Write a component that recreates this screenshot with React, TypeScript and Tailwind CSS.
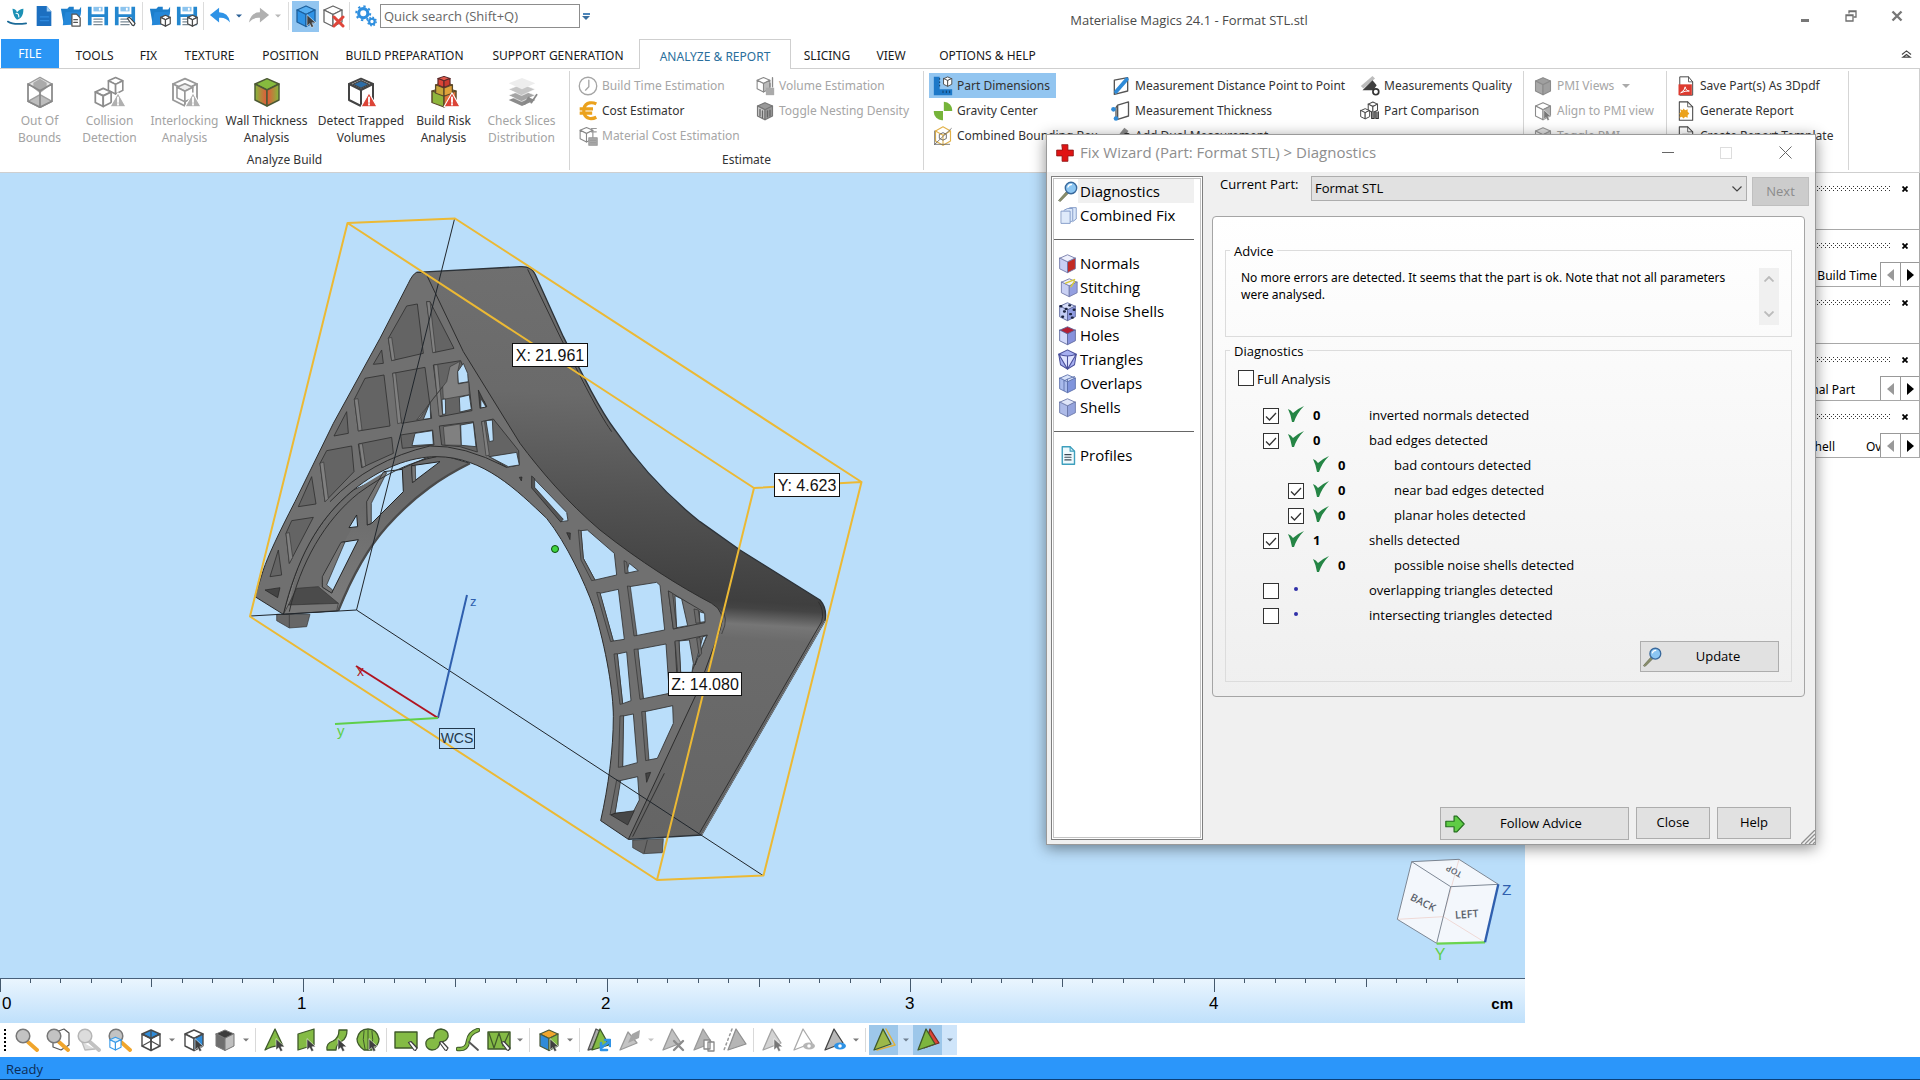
import React, { useState } from "react";

type P = { children?: React.ReactNode; s?: string; box?: string };

function Ico({ children, s = "size-6", box = "0 0 24 24" }: P) {
  return (
    <svg viewBox={box} className={`${s} shrink-0`} fill="none" strokeLinejoin="round" strokeLinecap="round" aria-hidden="true">
      {children}
    </svg>
  );
}

function CubeShape({ t = "#fff", l = "#fff", r = "#fff", k = "#4a4a4a", w = 1.5 }: { t?: string; l?: string; r?: string; k?: string; w?: number }) {
  return (
    <g stroke={k} strokeWidth={w}>
      <path d="M3 6 12 2l9 4-9 4.500z" fill={t} />
      <path d="M3 6v12l9 4.500V10.500z" fill={l} />
      <path d="M21 6v12l-9 4.500V10.500z" fill={r} />
    </g>
  );
}

const Warn = ({ c }: { c: string }) => (
  <g>
    <path d="M18 12.500 24 23H12z" fill={c} stroke="#fff" strokeWidth=".8" />
    <path d="M18 16v3.500M18 21v.5" stroke="#fff" strokeWidth="1.400" />
  </g>
);

const Arrow = ({ x = 0, y = 0, c = "#3f3f3f" }: { x?: number; y?: number; c?: string }) => (
  <path transform={`translate(${x} ${y})`} d="M13 11v11l2.700-2.300 1.800 3.800 2.200-1-1.800-3.700h3.600z" fill={c} stroke="#fff" strokeWidth=".5" />
);

const Pen = ({ c = "#3f3f3f" }: { c?: string }) => <path d="M14.500 14.500 17 13.500l6 6.500-1.500 2.500L20 22z" fill="#fff" stroke={c} strokeWidth="1.200" />;

const Caret = ({ c = "#8a8a8a" }: { c?: string }) => (
  <svg viewBox="0 0 8 4" className="h-1 w-2" aria-hidden="true">
    <path d="M0 0h8L4 4z" fill={c} />
  </svg>
);

/* ---------- quick access toolbar ---------- */

const Floppy = ({ children }: P) => (
  <Ico s="size-[22px]">
    <path d="M1 2h4v8h14V2h4v20h-4v-9H5v9H1z" fill="#2487cf" />
    <path d="M7 2h10v5H7z" fill="#8cc4ee" />
    <path d="M13 3h2v3h-2z" fill="#fff" />
    <path d="M7.500 15.500h9M7.500 18.500h9M7.500 21.500h9" stroke="#7a8a96" strokeWidth="1.300" />
    {children}
  </Ico>
);
const Folder = ({ children }: P) => (
  <Ico s="size-[22px]">
    <path d="M1 4h7l2-2h5v3h6l2-3v5l-3 14H4z" fill="#1c7ecb" />
    <path d="M6 8 23 7l-3 14-17 1z" fill="#2487d8" />
    {children}
  </Ico>
);
const SmallCube = () => (
  <g transform="translate(11 10) scale(.58)">
    <CubeShape w={2.2} />
  </g>
);
const FileNew = () => (
  <Ico s="size-[22px]">
    <path d="M4 1h11l5 6v16H4z" fill="#1c6fc0" />
    <path d="M15 1v6h5z" fill="#9fcdf3" />
    <path d="M8 13h9M8 17h9" stroke="#2f8ade" strokeWidth="1.500" />
  </Ico>
);
const Logo = () => (
  <Ico s="size-[22px]">
    <path d="M7 4q4 0 5 4 3-4 7-4 0 7-3 10-2 2-4 2-4-3-5-12z" fill="#1c91b5" />
    <path d="M11 9q3 0 3 4" stroke="#fff" strokeWidth="1.200" />
    <path d="M2 18q6 4 20 2" stroke="#1b6a98" strokeWidth="1.800" />
  </Ico>
);
const Undo = ({ c }: { c: string }) => (
  <Ico s="size-[22px]">
    <path d="M1 11 11 3v5q10 0 12 11-5-6-12-5v5z" fill={c} />
  </Ico>
);
const Redo = ({ c }: { c: string }) => (
  <Ico s="size-[22px]">
    <path d="M23 11 13 3v5Q3 8 1 19q5-6 12-5v5z" fill={c} />
  </Ico>
);
const Gears = () => (
  <Ico s="size-[22px]">
    <circle cx="9" cy="9" r="5" stroke="#2f8fdf" strokeWidth="3.400" />
    <circle cx="9" cy="9" r="7.600" stroke="#2f8fdf" strokeWidth="2.200" strokeDasharray="2.500 3.450" strokeLinecap="butt" />
    <circle cx="18.500" cy="18" r="3" stroke="#2f8fdf" strokeWidth="2.400" />
    <circle cx="18.500" cy="18" r="4.600" stroke="#2f8fdf" strokeWidth="1.600" strokeDasharray="1.800 1.800" strokeLinecap="butt" />
  </Ico>
);

function QBtn({ label, children, on }: { label: string; children: React.ReactNode; on?: boolean }) {
  return (
    <button aria-label={label} className={`flex h-[31px] w-[27px] shrink-0 items-center justify-center ${on ? "bg-[#92c5f0]" : ""}`}>
      {children}
    </button>
  );
}
const QSep = ({ wide }: { wide?: boolean }) => (
  <span className={`flex shrink-0 justify-center ${wide ? "w-2" : "w-[6px]"}`}>
    <span className="h-7 w-px bg-[#dcdcdc]" />
  </span>
);

function TitleBar() {
  return (
    <header className="flex h-[39px] items-start pl-[3px]">
      <div className="flex h-8 items-center">
        <QBtn label="Magics"><Logo /></QBtn>
        <QBtn label="New"><FileNew /></QBtn>
        <QBtn label="Open project">
          <Folder><path d="M13 10h5l4 4v9h-9z" fill="#fff" stroke="#555" strokeWidth="1.400" /><path d="M15 16h4M15 19h4" stroke="#555" strokeWidth="1.300" /></Folder>
        </QBtn>
        <QBtn label="Save project"><Floppy /></QBtn>
        <QBtn label="Save project as"><Floppy><Pen /></Floppy></QBtn>
        <QSep wide />
        <QBtn label="Import part"><Folder><SmallCube /></Folder></QBtn>
        <QBtn label="Save part as"><Floppy><SmallCube /></Floppy></QBtn>
        <QSep />
        <QBtn label="Undo"><Undo c="#2f93e6" /></QBtn>
        <button aria-label="Undo list" className="flex w-3 justify-center"><svg viewBox="0 0 8 4" className="h-1 w-[6px]"><path d="M0 0h8L4 4z" fill="#2a5f95" /></svg></button>
        <QBtn label="Redo"><Redo c="#b0b0b0" /></QBtn>
        <button aria-label="Redo list" className="flex w-3 justify-center"><svg viewBox="0 0 8 4" className="h-1 w-[6px]"><path d="M0 0h8L4 4z" fill="#b8b8b8" /></svg></button>
        <QSep wide />
        <QBtn label="Select parts" on>
          <Ico s="size-6"><CubeShape t="#56aef2" l="#2f93e6" r="#2f93e6" k="#1d5f9c" w={1.3} /><Arrow /></Ico>
        </QBtn>
        <QBtn label="Unload part">
          <Ico s="size-6"><CubeShape w={1.3} k="#666" /><path d="m13 13 9 9m0-9-9 9" stroke="#e0453a" strokeWidth="3" /></Ico>
        </QBtn>
        <QSep />
        <button aria-label="Settings" className="flex h-[31px] w-7 items-center justify-center"><Gears /></button>
        <input aria-label="Quick search" placeholder="Quick search (Shift+Q)" className="h-6 w-[200px] border border-[#8d8d8d] bg-white px-[3px] text-[13px] leading-5 text-[#444] outline-none placeholder:text-[#666]" />
        <button aria-label="Customize" className="flex w-3 flex-col items-center gap-px"><span className="h-[2px] w-[7px] bg-[#4d86bb]" /><Caret c="#3a6f9f" /></button>
      </div>
      <h1 className="flex-1 pt-[11px] pl-1 text-center text-[13px] leading-[18px] text-[#4a4a4a]">Materialise Magics 24.1 - Format STL.stl</h1>
      <div className="flex h-9 items-center text-[#6f6f6f]">
        <button aria-label="Minimize" className="flex w-[46px] justify-center"><span className="mt-[5px] h-[3px] w-2 bg-[#777]" /></button>
        <button aria-label="Restore" className="flex w-[46px] justify-center">
          <svg viewBox="0 0 12 12" className="mb-1 size-3" fill="none" stroke="#6f6f6f" strokeWidth="1.300"><path d="M4 3.500V1h7v6H8.500M4 1.600h7" /><path d="M1 5h7v6H1zM1 5.600h7" fill="#fff" /></svg>
        </button>
        <button aria-label="Close" className="flex w-[46px] justify-center">
          <svg viewBox="0 0 12 12" className="mb-1 size-3" stroke="#777" strokeWidth="2.400"><path d="m1.500 1.500 9 9m0-9-9 9" /></svg>
        </button>
      </div>
    </header>
  );
}

/* ---------- ribbon tabs ---------- */

const TABS: [string, string][] = [
  ["TOOLS", "w-[65px]"],
  ["FIX", "w-[43px]"],
  ["TEXTURE", "w-[79px]"],
  ["POSITION", "w-[83px]"],
  ["BUILD PREPARATION", "w-[145px]"],
  ["SUPPORT GENERATION", "w-[162px]"],
  ["ANALYZE & REPORT", "w-[152px]"],
  ["SLICING", "w-[72px]"],
  ["VIEW", "w-[56px]"],
  ["OPTIONS & HELP", "w-[137px]"],
];

function Tabs() {
  return (
    <nav className="relative z-10 -mb-px flex h-[30px] items-stretch pl-px font-['Noto_Sans',sans-serif] text-[12px]">
      <button className="mr-[3px] mb-px w-[58px] bg-[#2b96f5] text-white">FILE</button>
      {TABS.map(([t, w]) => (
        <button
          key={t}
          className={`${w} pt-1 whitespace-nowrap ${t === "ANALYZE & REPORT" ? "border border-b-0 border-[#cfcfcf] bg-white text-[#2a6f9c]" : "mb-px text-[#1a1a1a]"}`}
        >
          {t}
        </button>
      ))}
      <button aria-label="Collapse ribbon" className="mr-2 ml-auto">
        <svg viewBox="0 0 12 10" className="h-[9px] w-[11px]" fill="none" stroke="#444" strokeWidth="1.300"><path d="m1 5 5-4 5 4M2 8l4-3 4 3z" /></svg>
      </button>
    </nav>
  );
}

/* ---------- ribbon ---------- */

const G = "#9d9d9d";
const bigIcons: Record<string, React.ReactNode> = {
  out: (
    <Ico s="size-8">
      <path d="M3 6 12 1l9 5-9 5z" fill="#e2e2e2" stroke={G} />
      <path d="m7 5 5-3 5 3v4l-5 4-5-4z" fill="#aaa" />
      <path d="m3 19 9-5 9 5-9 4.500z" fill="#bdbdbd" stroke={G} />
      <path d="M3 6v13l9 4.500 9-4.500V6M3 6l9 5 9-5M12 11v12" stroke="#888" strokeWidth="1.300" />
    </Ico>
  ),
  collision: (
    <Ico s="size-8">
      <g transform="translate(9 0) scale(.6)"><CubeShape k="#8d8d8d" w={2} /></g>
      <g transform="translate(-1 8) scale(.66)"><CubeShape k="#8d8d8d" w={2} /></g>
      <Warn c="#b0b0b0" />
    </Ico>
  ),
  interlock: (
    <Ico s="size-8">
      <CubeShape k="#999" w={1.4} />
      <g transform="translate(4 4.500) scale(.66)"><CubeShape k="#999" t="#eee" w={1.8} /></g>
      <Warn c="#b0b0b0" />
    </Ico>
  ),
  wall: (
    <Ico s="size-8">
      <defs>
        <linearGradient id="wl" x1="0" x2="1"><stop offset="0" stopColor="#85b93c" /><stop offset="1" stopColor="#e4573a" /></linearGradient>
        <linearGradient id="wr" x1="0" x2="1"><stop offset="0" stopColor="#e4573a" /><stop offset="1" stopColor="#85b93c" /></linearGradient>
      </defs>
      <CubeShape t="#86bb3e" l="url(#wl)" r="url(#wr)" k="#4d5a35" w={1.1} />
    </Ico>
  ),
  trapped: (
    <Ico s="size-8">
      <CubeShape k="#444" />
      <path d="m6 6.200 6-2.700 6 2.700-6 3z" fill="#2d6da6" stroke="#444" />
      <Warn c="#dc4437" />
    </Ico>
  ),
  risk: (
    <Ico s="size-8">
      <g transform="translate(0 7) scale(1 .72)"><CubeShape t="#e8b23c" l="#8fb63c" r="#e0723a" k="#5a4a2a" w={1.1} /></g>
      <g transform="translate(3.600 3.500) scale(.7 .52)"><CubeShape t="#e8b23c" l="#c9a63a" r="#e0a23a" k="#5a4a2a" w={1.4} /></g>
      <g transform="translate(6 -.5) scale(.5 .4)"><CubeShape t="#e2584a" l="#dc4437" r="#c93a30" k="#5a2a2a" w={1.8} /></g>
      <Warn c="#dc4437" />
    </Ico>
  ),
  slices: (
    <Ico s="size-8">
      <path d="m2 18 10-4 10 4-10 4.500z" fill="#8b8b8b" />
      <path d="m2 14.500 10-4 10 4-10 4.500z" fill="#a5a5a5" stroke="#fff" strokeWidth=".5" />
      <path d="m2 10 10-4 10 4-10 4.500z" fill="#c6c6c6" stroke="#fff" strokeWidth=".5" />
      <path d="m2 5.500 10-4 10 4L12 10z" fill="#ededed" />
      <path d="m14 21 3-5 2 4 4-6" stroke="#888" strokeWidth="1.300" />
    </Ico>
  ),
};

const BIG: [string, string, string, string, boolean][] = [
  ["Out Of", "Bounds", "out", "w-[71px]", false],
  ["Collision", "Detection", "collision", "w-[69px]", false],
  ["Interlocking", "Analysis", "interlock", "w-[81px]", false],
  ["Wall Thickness", "Analysis", "wall", "w-[83px]", true],
  ["Detect Trapped", "Volumes", "trapped", "w-[106px]", true],
  ["Build Risk", "Analysis", "risk", "w-[59px]", true],
  ["Check Slices", "Distribution", "slices", "w-[97px]", false],
];

const smallIcons: Record<string, React.ReactNode> = {
  clock: <><circle cx="12" cy="12" r="10.500" stroke="#a5a5a5" strokeWidth="1.600" /><path d="M13 5v8l-4 4" stroke="#a5a5a5" strokeWidth="1.600" /></>,
  euro: <path d="M22 3.500q-4-2-8-1.200Q8.500 3.500 7 9m0 5q1.500 6 7 7 4 .5 8-1.500M2 9.500h16M2 14.500h15M7 8v8" stroke="#eba21d" strokeWidth="3.800" strokeLinecap="butt" />,
  mat: <><g transform="scale(.85)"><CubeShape k="#888" w={1.5} /></g><path d="M13 14h10v9H13zM15 17h6M15 20h6M16 3h6M16 7h6" fill="#aaa" stroke="#999" strokeWidth="1.300" /></>,
  vol: <><g transform="scale(.85)"><CubeShape k="#888" r="#bbb" w={1.5} /></g><path d="M13 14h10v9H13z" fill="#aaa" /><path d="M21 2v11m-3-4v4" stroke="#888" strokeWidth="1.600" /></>,
  nest: <><CubeShape k="#777" t="#999" l="#ccc" r="#999" w={1.4} /><path d="M6 10v8m3-6v8m6-8v7m3-8v7" stroke="#666" strokeWidth="1.600" /></>,
  dims: <><path d="M1 1h7v15h15v7H1z" fill="#1d78c8" /><path d="M8 3v1M8 7v1M8 11v1M12 18v2m4-2v2m4-2v2" stroke="#133f66" strokeWidth="1.200" /><g transform="translate(11 0) scale(.55)"><CubeShape w={2} /></g></>,
  grav: <path d="M13 1a10 10 0 0 1 10 11H13zM12 23A10 10 0 0 1 1 12h11z" fill="#76b43a" />,
  comb: <><path d="M3 6 12 1l9 5v12l-9 5-9-5z" stroke="#e2b24a" strokeWidth="1.400" /><path d="m3 6 9 5 9-5M12 11v12" stroke="#e2b24a" strokeWidth="1.300" /><path d="M2 22 22 3M2 22h18M2 22V6" stroke="#666" /><path d="m8 10 4-2 4 2v5l-4 2-4-2z" stroke="#555" /></>,
  mdist: <><path d="M4 5 20 2v16L4 22z" fill="#fff" stroke="#555" strokeWidth="1.600" /><path d="M6 19 19 4" stroke="#2f8bd8" strokeWidth="4.500" /></>,
  mthick: <><path d="M8 5 21 1v17L8 22zM8 5l-2 3v13" fill="#fff" stroke="#555" strokeWidth="1.600" /><circle cx="3" cy="10" r="2.800" fill="#2f8bd8" /><circle cx="6" cy="21" r="2.800" fill="#2f8bd8" /></>,
  mdual: <><path d="M2 20 16 2l5 4L8 22z" fill="#8d8d8d" /><circle cx="19" cy="12" r="4" fill="#333" /></>,
  qual: <><path d="M1 12 15 0l3 3L4 15z" fill="#bdbdbd" /><path d="M3 17 15 5l5 6-4 6z" fill="#3f3f3f" /><circle cx="19" cy="19" r="3.500" fill="#fff" stroke="#333" strokeWidth="2" /></>,
  comp: <><g transform="translate(8 0) scale(.62)"><CubeShape w={2} /></g><g transform="translate(-1 8) scale(.6)"><CubeShape w={2} /></g><path d="M14 13v8h3v-8m2 0v8h3v-8" fill="#999" stroke="#333" strokeWidth="1.300" /></>,
  pmi: <CubeShape k="#8b8b8b" t="#9f9f9f" l="#a9a9a9" r="#9f9f9f" w={1.3} />,
  align: <><CubeShape k="#8b8b8b" r="#b0b0b0" w={1.3} /><Arrow c="#777" /></>,
  tog: <CubeShape k="#999" t="#ddd" l="#eee" r="#c9c9c9" w={1.3} />,
  pdf: <><path d="M5 1h10l5 6v16H5z" fill="#fff" stroke="#4a4a4a" strokeWidth="1.200" /><path d="M15 1v6h5" stroke="#4a4a4a" /><path d="M3 10h16v13H3z" fill="#dd3b30" /><path d="M6 20q5-3 5-7 1 5 5 5-5-.5-10 2z" stroke="#fff" strokeWidth="1.200" /></>,
  rep: <><path d="M4 1h10l6 6v16H4z" fill="#fff" stroke="#4a4a4a" strokeWidth="1.300" /><path d="M14 1v6h6" stroke="#4a4a4a" /><path d="m9 9 2 2 3-1v3l2 2-2 2v3l-3-1-2 2-2-2-3 1 1-3-1-2 2-2-1-3 3 1z" fill="#eba21d" /></>,
  tpl: <><path d="M4 1h10l6 6v16H4z" fill="#fff" stroke="#4a4a4a" strokeWidth="1.300" /><path d="M14 1v6h6M8 10h8" stroke="#4a4a4a" /></>,
};

type Item = { t: string; i: string; off?: boolean; on?: boolean; caret?: boolean };

function Col({ items, w }: { items: Item[]; w: string }) {
  return (
    <div className={`flex flex-col items-start ${w}`}>
      {items.map((it) => (
        <button
          key={it.t}
          disabled={it.off}
          className={`flex h-[25px] items-center gap-1 pr-[6px] pl-1 whitespace-nowrap ${it.on ? "bg-[#92c5f0]" : ""} ${it.off ? "text-[#a6a6a6]" : "text-[#333]"}`}
        >
          <Ico s="size-5">{smallIcons[it.i]}</Ico>
          {it.t}
          {it.caret && <span className="pl-1"><Caret c="#aaa" /></span>}
        </button>
      ))}
    </div>
  );
}

function Group({ label, children, w }: { label: string; children: React.ReactNode; w: string }) {
  return (
    <section className={`my-[2px] flex shrink-0 flex-col border-r border-[#d5d5d5] pt-[2px] ${w}`} aria-label={label}>
      <div className="flex flex-1 items-start">{children}</div>
      <div className="pb-px text-center leading-[18px] text-[#333]">{label}</div>
    </section>
  );
}

function Ribbon() {
  return (
    <div className="flex h-[105px] overflow-hidden border-y border-r border-[#cfcfcf] font-['Noto_Sans',sans-serif] text-[12px]">
      <Group label="Analyze Build" w="w-[570px]">
        <div className="flex pl-1">
          {BIG.map(([a, b, i, w, on]) => (
            <button key={a} disabled={!on} className={`flex flex-col items-center pt-[3px] leading-[17px] whitespace-nowrap ${w} ${on ? "text-[#333]" : "text-[#a3a3a3]"}`}>
              {bigIcons[i]}
              <span className="-mx-3 pt-1">{a}</span>
              <span>{b}</span>
            </button>
          ))}
        </div>
      </Group>
      <Group label="Estimate" w="w-[354px]">
        <Col w="ml-1 w-[177px]" items={[{ t: "Build Time Estimation", i: "clock", off: true }, { t: "Cost Estimator", i: "euro" }, { t: "Material Cost Estimation", i: "mat", off: true }]} />
        <Col w="w-[170px]" items={[{ t: "Volume Estimation", i: "vol", off: true }, { t: "Toggle Nesting Density", i: "nest", off: true }]} />
      </Group>
      <Group label="Measure" w="w-[600px]">
        <Col w="ml-[5px] w-[178px]" items={[{ t: "Part Dimensions", i: "dims", on: true }, { t: "Gravity Center", i: "grav" }, { t: "Combined Bounding Box", i: "comb" }]} />
        <Col w="w-[249px]" items={[{ t: "Measurement Distance Point to Point", i: "mdist" }, { t: "Measurement Thickness", i: "mthick" }, { t: "Add Dual Measurement", i: "mdual" }]} />
        <Col w="w-[160px]" items={[{ t: "Measurements Quality", i: "qual" }, { t: "Part Comparison", i: "comp" }]} />
      </Group>
      <Group label="PMI" w="w-[143px]">
        <Col w="ml-[5px]" items={[{ t: "PMI Views", i: "pmi", off: true, caret: true }, { t: "Align to PMI view", i: "align", off: true }, { t: "Toggle PMI", i: "tog", off: true }]} />
      </Group>
      <Group label="Report" w="w-[182px]">
        <Col w="ml-[5px]" items={[{ t: "Save Part(s) As 3Dpdf", i: "pdf" }, { t: "Generate Report", i: "rep" }, { t: "Create Report Template", i: "tpl" }]} />
      </Group>
    </div>
  );
}

/* ---------- 3D view ---------- */

const SKY = "#badefa";

const recess = [
  "530,318 562,312 580,460 485,482 475,415",
  "590,305 600,305 672,445 610,458",
  "455,450 460,490 430,493",
  "405,535 462,525 480,678 385,693 373,598",
  "488,520 585,502 605,655 515,670",
  "610,495 692,482 716,545 726,632 630,650",
  "350,635 355,700 312,708",
  "290,752 365,738 372,815 285,905 270,790",
  "385,732 485,712 490,760 395,803",
  "512,705 608,690 612,735 517,745",
  "628,678 730,665 742,756 690,740 635,735",
  "755,665 790,657 866,752 868,795 830,802 772,765",
  "245,830 258,912 205,920",
  "185,962 250,952 178,1090 168,1000",
  "145,1050 155,1125 120,1130",
];
const walls = [
  "475,415 485,412 495,479 485,482",
  "590,305 600,305 617,456 608,458",
  "373,598 384,596 396,690 385,693",
  "488,520 497,519 514,668 503,671",
  "612,495 623,494 638,646 627,648",
  "270,790 281,786 295,896 285,905",
  "387,732 397,731 407,798 397,802",
  "755,665 763,663 778,765 768,768",
  "168,1000 178,998 188,1072 178,1090",
];
const sky = [
  "700,490 713,520 715,545 685,550 683,515",
  "688,592 718,585 724,628 690,636",
  "636,598 646,597 647,642 638,643",
  "600,608 602,655 580,658",
  "762,603 770,620 754,623",
  "555,700 607,692 610,733 546,737",
  "692,675 730,668 738,740 694,736",
  "768,662 787,660 790,722 778,725",
  "778,770 860,757 868,795 835,800",
  "908,832 1010,937 1014,962 992,965 912,868",
];
const skyRight = [
  "243,302 262,300 343,370 350,435 285,450 250,385",
  "388,400 415,422 378,430",
  "300,490 355,478 373,628 340,633",
  "388,470 470,457 480,466 494,600 408,617",
  "525,497 545,507 563,587 530,593",
  "598,545 614,550 615,575 600,577",
  "352,672 380,666 393,812 368,821",
  "413,658 498,642 508,790 430,806",
  "537,633 568,630 580,700 576,727 542,727",
  "609,620 620,617 585,705",
  "370,858 400,852 412,998 368,1010",
  "434,845 518,827 520,880 472,985 445,990",
  "360,1052 413,1040 418,1110 400,1145 345,1150",
];
const darkRight = [
  "235,300 243,302 250,385 285,450 275,452 243,390",
  "372,392 380,396 385,428 375,430",
  "290,487 300,488 340,633 332,635",
  "382,468 391,469 411,616 402,618",
  "505,483 518,490 530,594 520,597",
  "525,633 537,632 542,727 533,728",
  "342,672 352,671 368,821 360,823",
  "402,658 414,657 430,806 420,808",
  "360,858 371,857 368,1010 355,1012",
  "425,845 436,844 447,990 437,992",
  "350,1050 362,1052 345,1150 330,1155",
];

function DimLabel({ x, y, w, t }: { x: number; y: number; w: number; t: string }) {
  return (
    <g>
      <rect x={x} y={y} width={w} height="23" fill="#fff" stroke="#111" />
      <text x={x + w / 2} y={y + 17} textAnchor="middle" fontSize="16" fill="#111">{t}</text>
    </g>
  );
}

function Scene() {
  return (
    <svg viewBox="0 173 1525 805" preserveAspectRatio="xMinYMin meet" className="absolute inset-0 size-full font-['Liberation_Sans',sans-serif]" role="img" aria-label="Part in 3D view">
      <defs>
        <linearGradient id="skin" gradientUnits="userSpaceOnUse" x1="1000" y1="200" x2="900" y2="1930">
          <stop offset="0" stopColor="#6f6f6f" />
          <stop offset=".22" stopColor="#6a6a6a" />
          <stop offset=".4" stopColor="#525252" />
          <stop offset=".56" stopColor="#3f3f3f" />
          <stop offset=".572" stopColor="#444" />
          <stop offset=".6" stopColor="#767676" />
          <stop offset=".625" stopColor="#6b6b6b" />
          <stop offset="1" stopColor="#646464" />
        </linearGradient>
        <linearGradient id="soffit" gradientUnits="userSpaceOnUse" x1="300" y1="850" x2="260" y2="1180">
          <stop offset="0" stopColor="#686868" />
          <stop offset="1" stopColor="#7a7a7a" />
        </linearGradient>
      </defs>

      <g transform="translate(230 200) scale(.33333)" strokeLinejoin="round">
        <path d="M140 1243h100l-10 37-52 4-38-22z" fill="#666" stroke="#333" strokeWidth="2" />
        <path d="M178 1245v38" stroke="#333" strokeWidth="2" />
        <path d="m1208 1920 92-4-3 42-57 3-32-18z" fill="#666" stroke="#333" strokeWidth="2" />
        <path d="m1252 1920-10 40" stroke="#333" strokeWidth="2" />

        <path
          d="M560 217 870 200Q905 198 915 222L1000 410C1060 530 1110 630 1155 690 1250 830 1340 910 1410 965L1530 1050 1770 1200Q1792 1225 1785 1262L1415 1905 1195 1918 1175 1500 1130 1230 1040 1020 930 860 800 700 700 500z"
          fill="url(#skin)"
        />
        <path d="M560 217 870 200Q905 198 915 222L1000 410C1060 530 1110 630 1155 690 1250 830 1340 910 1410 965L1530 1050 1770 1200Q1792 1225 1785 1262L1415 1905 1195 1918" fill="none" stroke="#2c3238" strokeWidth="4" />
        <path d="M893 208 992 414C1060 545 1100 630 1145 695M1765 1205Q1784 1232 1775 1265L1409 1898" fill="none" stroke="#303030" strokeWidth="3" />
        <path d="M1785 1262 1415 1905" stroke="#8a8a8a" strokeWidth="3" />

        <path d="M160 1243C200 1080 260 960 370 870L620 760 720 790C640 830 560 880 470 980Q390 1070 325 1232z" fill="url(#soffit)" stroke="#2e2e2e" strokeWidth="3" />
        <path d="M375 870 465 815 400 920 270 1160 180 1215Q200 1020 375 870z" fill="#6c6c6c" />
        <path d="M200 1165 265 1160 325 1210 175 1215z" fill="#4b4b4b" stroke="#333" strokeWidth="2" />
        <path d="M160 1243 175 1215 325 1210 320 1232z" fill="#777" stroke="#333" strokeWidth="2" />
        <g fill={SKY} stroke="#222" strokeWidth="3">
          <path d="M462 815 517 808 520 875 425 970 412 975 412 905z" />
          <path d="m545 797 85-12-82 62z" />
          <path d="m380 945 3 35-26 3z" />
          <path d="m335 1027 50-8-80 160-28-18q0-30 6-40z" />
        </g>
        <path d="M720 790C640 830 560 880 470 980Q390 1070 325 1232" fill="none" stroke="#4a4a4a" strokeWidth="7" />
        <path d="M410 905 412 975 424 970 424 910 470 818 460 816zM545 797 547 847 557 842 556 797zM277 1130 277 1161 305 1179 308 1170 290 1155 345 1026 333 1027z" fill="#777" stroke="#222" strokeWidth="2" />

        <path
          d="M560 217Q548 222 535 250L450 415 310 670 195 905Q120 1050 100 1110L75 1190 160 1243C200 1080 260 960 370 870 450 805 540 770 620 770 760 770 860 870 950 955 1010 1030 1065 1150 1090 1220 1130 1350 1150 1480 1150 1550 1150 1650 1135 1760 1112 1862L1195 1918 1400 1480 1470 1290Q1490 1235 1445 1210C1350 1160 1230 1085 1110 990 1010 905 930 810 870 730L700 455 590 225Q575 214 560 217z"
          fill="#707070"
          stroke="#2c2c2c"
          strokeWidth="3"
        />
        <path d="M178 1235C210 1090 285 960 385 880 460 825 540 785 620 770M300 905Q420 780 600 738 700 735 830 802" fill="none" stroke="#2e2e2e" strokeWidth="3" />
        <g fill="#646464" stroke="#303030" strokeWidth="2.500">
          {recess.map((p) => <polygon key={p} points={p} />)}
        </g>
        <g fill="#808080" stroke="#3a3a3a" strokeWidth="2">
          {walls.map((p) => <polygon key={p} points={p} />)}
          <polygon points="660,500 690,484 683,515 685,552 716,546 718,584 640,598 638,560 600,608 570,655 560,660 650,545" />
          <polygon points="640,680 690,672 694,736 645,735" />
        </g>
        <g fill={SKY} stroke="#303030" strokeWidth="2.500">
          {sky.map((p) => <polygon key={p} points={p} />)}
        </g>
        <path d="M905 828 905 864 992 966 1000 958 914 862 914 836z" fill="#555" stroke="#222" strokeWidth="2" />
        <path d="m105 1170 45-7-7 30zM868 832l8-1-2 12zM1010 998l11 1-1 20zM745 570l25 50-20 5z" fill="#444" stroke="#222" strokeWidth="2" />
        <path d="m754 600 12 20-12 2z" fill={SKY} />

        <g transform="translate(810 690)">
          <g fill="#707070" stroke="#303030" strokeWidth="2.500">
            <polygon points="505,483 610,545 615,578 520,597" />
            <polygon points="525,635 622,615 590,690 575,727 530,727" />
          </g>
          <g fill={SKY} stroke="#303030" strokeWidth="2.500">
            {skyRight.map((p) => <polygon key={p} points={p} />)}
          </g>
          <g fill="#6a6a6a" stroke="#303030" strokeWidth="2">
            {darkRight.map((p) => <polygon key={p} points={p} />)}
            <polygon points="582,537 595,540 600,578 588,580" />
            <polygon points="590,625 600,622 605,670 598,680" />
          </g>
          <path d="m345 1150 58-8-20 43-50-30z" fill="#474747" stroke="#222" strokeWidth="2" />
          <path d="m437 1030 15-3-12 30z" fill="#444" stroke="#222" strokeWidth="2" />
          <path d="m398 1220 95-190" stroke="#303030" strokeWidth="3" />
          <path d="M660 535Q690 560 665 612" stroke="#303030" strokeWidth="2" fill="none" />
        </g>
      </g>

      <path d="M454.500 219 356.500 610 250.500 616M356.500 610 763 875.500" fill="none" stroke="#20262c" />
      <path d="M347.500 223 455 218.500 861.500 482 754 488zM347.500 223 250 616.500 657 880 763.500 875.500 861.500 482M754 488 657 880" stroke="#ecb934" strokeWidth="2" fill="none" strokeLinejoin="round" />
      <circle cx="555" cy="549" r="3.500" fill="#3fd43f" stroke="#0c4a0c" />

      <g strokeWidth="2">
        <path d="m438 718 29-123" stroke="#2f5fae" />
        <path d="m438 718-82-52" stroke="#b01420" />
        <path d="m438 718-103 6" stroke="#5fcf4a" />
      </g>
      <text x="470" y="606" fontSize="13" fill="#2f5fae">z</text>
      <text x="357" y="676" fontSize="14" fill="#b01420">x</text>
      <text x="337" y="736" fontSize="15" fill="#5fcf4a">y</text>
      <rect x="439.500" y="728.500" width="35" height="20" fill="none" stroke="#23384c" />
      <text x="457" y="743" textAnchor="middle" fontSize="14" fill="#23384c">WCS</text>

      <DimLabel x={512.5} y={343.5} w={75} t="X: 21.961" />
      <DimLabel x={774.5} y={473.5} w={65} t="Y: 4.623" />
      <DimLabel x={668.5} y={672.5} w={73} t="Z: 14.080" />

      <g transform="translate(1380 780) scale(.33333)" strokeLinejoin="round">
        <path d="M95 245 237 238 355 313 315 487 170 490 52 418z" fill="#f3f7fc" />
        <path d="M52 418 190 410 237 238M190 410 315 487" fill="none" stroke="#efd9d6" strokeWidth="3" />
        <path d="M95 245 237 238 355 313 212 320zM95 245 52 418 170 490 212 320" fill="none" stroke="#7c8794" strokeWidth="3" />
        <path d="M170 491 315 487" stroke="#6bd44f" strokeWidth="7" />
        <path d="M315 487 355 313" stroke="#2f5fae" strokeWidth="7" />
        <g className="font-['Open_Sans',sans-serif]" fontWeight="600" fill="#59606a" textAnchor="middle">
          <text transform="translate(124 377) rotate(27)" fontSize="31">BACK</text>
          <text transform="translate(261 414) rotate(-4)" fontSize="32">LEFT</text>
          <text transform="translate(226 266) rotate(208)" fontSize="25">TOP</text>
        </g>
        <text x="180" y="540" textAnchor="middle" fontSize="48" fill="#5fcf4a">Y</text>
        <text x="380" y="345" textAnchor="middle" fontSize="46" fill="#2f5fae">Z</text>
      </g>
    </svg>
  );
}

function Ruler() {
  const ticks = Array.from({ length: 49 }, (_, i) => i);
  return (
    <div className="relative h-[45px] shrink-0 border-t border-[#48607a] bg-linear-to-b from-[#eaf5fe] to-[#bfe0fb] font-['Liberation_Sans',sans-serif] text-[17px] text-black">
      <svg className="absolute inset-x-0 top-0 h-4 w-full" aria-hidden="true">
        {ticks.map((i) => (
          <path key={i} d={`M${Math.floor(i * 30.36) + 0.5} 0v${i % 10 === 0 ? 13 : i % 5 === 0 ? 8 : 4}`} stroke="#44586c" />
        ))}
      </svg>
      <div className="flex pt-[15px] leading-[20px]">
        {[0, 1, 2, 3, 4].map((n) => (
          <span key={n} className={n === 0 ? "w-[297px] pl-[2px]" : n === 4 ? "flex-1" : "w-[304px]"}>{n}</span>
        ))}
        <span className="pr-3 text-[15px] font-bold">cm</span>
      </div>
    </div>
  );
}

/* ---------- docked pages on the right ---------- */

const PAGES: { tabs: string[]; clip?: string; pad: string }[] = [
  { tabs: [], pad: "" },
  { tabs: ["Build Time"], pad: "pr-[3px]" },
  { tabs: [], pad: "" },
  { tabs: ["Original Part"], pad: "pr-[25px]" },
  { tabs: ["Shell"], clip: "Overlaps", pad: "" },
];

function SidePanels() {
  return (
    <aside className="w-[395px] shrink-0 bg-white">
      {PAGES.map((p, i) => (
        <section key={i} className="flex h-[57px] flex-col border-r border-b border-[#a8a8a8]">
          <div className="flex h-8 items-center">
            <svg className="h-[6px] min-w-0 flex-1" aria-hidden="true">
              <defs>
                <pattern id={`dots${i}`} width="4" height="4" patternUnits="userSpaceOnUse">
                  <path d="M0 0h1v1H0zM2 2h1v1H2z" fill="#333" />
                </pattern>
              </defs>
              <rect width="100%" height="6" fill={`url(#dots${i})`} />
            </svg>
            <button aria-label="Close page" className="flex w-[29px] justify-center">
              <svg viewBox="0 0 6 6" className="size-[6px]" stroke="#000" strokeWidth="1.800"><path d="m.5.5 5 5m0-5-5 5" /></svg>
            </button>
          </div>
          {p.tabs.length > 0 && (
            <div className="flex h-6 font-['Noto_Sans',sans-serif] text-[12px] text-black">
              <div className={`flex flex-1 justify-end gap-[31px] overflow-hidden pt-1 leading-[20px] ${p.pad}`}>
                {p.tabs.map((t) => <button key={t}>{t}</button>)}
                {p.clip && <button className="w-[14px] overflow-hidden">{p.clip}</button>}
              </div>
              <button aria-label="Previous" className="flex w-5 items-center justify-center border-t border-l border-[#999]"><svg viewBox="0 0 7 12" className="h-3 w-[7px]"><path d="M7 0v12L0 6z" fill="#999" /></svg></button>
              <button aria-label="Next" className="flex w-[19px] items-center justify-center border-t border-l border-[#999]"><svg viewBox="0 0 7 12" className="h-3 w-[7px]"><path d="M0 0v12l7-6z" fill="#000" /></svg></button>
            </div>
          )}
        </section>
      ))}
    </aside>
  );
}

/* ---------- fix wizard ---------- */

const L = "#c3cdf5";
const wiz: Record<string, React.ReactNode> = {
  Diagnostics: <><path d="m2 22 9-10 2 2-9 9z" fill="#8a8f6a" stroke="#6d7258" /><circle cx="16" cy="8" r="6.500" fill="#8cc6f2" stroke="#39699c" strokeWidth="1.600" /><path d="M12.500 7q1-3 4-3" stroke="#fff" strokeWidth="1.500" /></>,
  "Combined Fix": <g stroke="#7b95c4" fill="#dbe8fa"><path d="m11 5 4-2h7v13l-4 3" /><path d="m8 6 4-2h6v14l-4 2" /><path d="M5 7h10v14H5z" fill="#dfeafa" /></g>,
  Normals: <CubeShape t="#eef0fc" l="#c9d0f3" r="#c22a24" k="#7178a8" w={1} />,
  Stitching: <g transform="translate(2 0)"><CubeShape t="#eef0fc" l="#c9d0f3" r="#949fe0" k="#7178a8" w={1} /><path d="m8 7 10-4M14 11l4-6" stroke="#d8c93a" strokeWidth="1.800" /></g>,
  "Noise Shells": <><CubeShape t="#d7defa" l={L} r="#8f9be0" k="#5e689c" w={1} /><path d="M4 6h1M8 12h1M6 18h1M14 5h1M15 15h1M19 10h1M17 19h1M10 9h1" stroke="#1c2440" strokeWidth="2.600" /></>,
  Holes: <CubeShape t="#b51f35" l="#d3d9fa" r="#8792dd" k="#5e689c" w={1} />,
  Triangles: <g stroke="#4a4f9a" strokeWidth="1.200"><path d="M2 6 12 1l10 5-2 12-8 5-8-5z" fill="#a6aff0" /><path d="M2 6q10 4 20 0L12 23zM12 9v14" fill="#dfe3ff" /></g>,
  Overlaps: <><CubeShape t="#d9e3fa" l="#a9bbec" r="#7f94dc" k="#5b70ac" w={1} /><path d="m8 9 4-2v13m0-13 8-3M8 9v11" stroke="#5b70ac" /></>,
  Shells: <CubeShape t="#dfe5f8" l="#aebbe8" r="#94a3dd" k="#6a77a8" w={1} />,
  Profiles: <><path d="M6 2h9l5 5v15H6z" fill="#eef9fd" stroke="#3d9fbd" strokeWidth="1.600" /><path d="M15 2v5h5" stroke="#3d9fbd" strokeWidth="1.300" /><path d="M9 11h7M9 14h7M9 17h7" stroke="#3c4a56" strokeWidth="1.400" /></>,
};

const WIZ_ROWS = ["Diagnostics", "Combined Fix", "", "Normals", "Stitching", "Noise Shells", "Holes", "Triangles", "Overlaps", "Shells", "", "Profiles"];

type Diag = { t: string; n?: string; cb?: boolean; sub?: boolean };
const DIAG: Diag[] = [
  { t: "inverted normals detected", n: "0", cb: true },
  { t: "bad edges detected", n: "0", cb: true },
  { t: "bad contours detected", n: "0", sub: true },
  { t: "near bad edges detected", n: "0", cb: true, sub: true },
  { t: "planar holes detected", n: "0", cb: true, sub: true },
  { t: "shells detected", n: "1", cb: true },
  { t: "possible noise shells detected", n: "0", sub: true },
  { t: "overlapping triangles detected", cb: true },
  { t: "intersecting triangles detected", cb: true },
];

function Check({ id, initial }: { id: string; initial: boolean }) {
  const [on, setOn] = useState(initial);
  return (
    <span className="grid size-4 shrink-0">
      <input id={id} type="checkbox" checked={on} onChange={() => setOn(!on)} className="col-start-1 row-start-1 size-4 appearance-none border border-[#333] bg-white" />
      {on && (
        <svg viewBox="0 0 16 16" className="pointer-events-none col-start-1 row-start-1 size-4" fill="none" stroke="#333" strokeWidth="1.300"><path d="m3 8.500 3.500 3.500L13 5" /></svg>
      )}
    </span>
  );
}

function WButton({ children, w }: { children: React.ReactNode; w: string }) {
  return <button className={`border border-[#adadad] bg-[#e1e1e1] ${w}`}>{children}</button>;
}

function FixWizard() {
  return (
    <div role="dialog" aria-label="Fix Wizard" className="absolute top-[134px] left-[1046px] z-20 flex h-[711px] w-[770px] flex-col border border-[#9a9a9a] bg-[#f0f0f0] text-[13px] text-black shadow-[0_3px_14px_rgba(0,0,0,0.45)]">
      <div className="flex h-[37px] shrink-0 items-center bg-white pb-[2px] pl-2">
        <Ico s="size-5"><path d="M8.500 2h7v6.500H22v7h-6.500V22h-7v-6.500H2v-7h6.500z" fill="#e01313" stroke="#8e1616" strokeWidth="1" /></Ico>
        <h2 className="ml-[5px] flex-1 text-[15px] text-[#8e8e8e]">Fix Wizard (Part: Format STL) &gt; Diagnostics</h2>
        <button aria-label="Minimize dialog" className="flex w-[58px] justify-center"><span className="h-px w-3 bg-[#666]" /></button>
        <button aria-label="Maximize dialog" disabled className="flex w-[58px] justify-center"><span className="size-3 border border-[#ddd]" /></button>
        <button aria-label="Close dialog" className="flex w-[60px] justify-center"><svg viewBox="0 0 13 13" className="size-[13px]" stroke="#666"><path d="m.5.5 12 12m0-12-12 12" /></svg></button>
      </div>

      <div className="flex flex-1 pt-1 pb-1 pl-1">
        <ul className="w-[152px] shrink-0 border border-[#7f7f7f] bg-white pt-[2px] pr-2 pl-px text-[15px] outline-1 -outline-offset-3 outline-[#c4c4c4]">
          {WIZ_ROWS.map((r, i) =>
            r ? (
              <li key={i} className="flex h-6 items-center pl-1">
                <Ico s="size-[21px]">{wiz[r]}</Ico>
                <button className={`h-6 flex-1 pl-[2px] text-left leading-6 whitespace-nowrap ${i === 0 ? "bg-[#f0f0f0]" : ""}`}>{r}</button>
              </li>
            ) : (
              <li key={i} className="flex h-6 items-center"><hr className="flex-1 border-[#666]" /></li>
            ),
          )}
        </ul>

        <div className="flex flex-1 flex-col pl-[9px]">
          <div className="flex h-10 items-start pl-2">
            <label htmlFor="part" className="w-[91px] leading-[16px]">Current Part:</label>
            <div className="grid flex-1">
              <select id="part" className="col-start-1 row-start-1 h-[25px] appearance-none border border-[#adadad] bg-[#e1e1e1] px-[3px] outline-none">
                <option>Format STL</option>
              </select>
              <svg viewBox="0 0 10 6" className="pointer-events-none col-start-1 row-start-1 mr-[5px] h-[6px] w-[10px] self-center justify-self-end" fill="none" stroke="#444" strokeWidth="1.200"><path d="m.5.5 4.500 4.500L9.500.5" /></svg>
            </div>
            <button disabled className="mt-px mr-[6px] ml-[5px] h-[29px] w-[57px] border border-[#bfbfbf] bg-[#cccccc] text-[#8b8b8b]">Next</button>
          </div>

          <div className="mr-[10px] h-[481px] rounded border border-[#a5a5a5] bg-linear-to-b from-white to-[#efefef] px-3 pt-6">
            <fieldset className="h-24 border border-[#dcdcdc]">
              <legend className="ml-1 px-1 pt-px leading-[18px]">Advice</legend>
              <div className="flex pt-2 pr-3 pl-[15px]">
                <p className="flex-1 pt-px pr-3 font-['Noto_Sans',sans-serif] text-[12px] leading-[17px]">No more errors are detected. It seems that the part is ok. Note that not all parameters were analysed.</p>
                <div className="flex h-[57px] w-5 flex-col items-center justify-between bg-[#f0f0f0] py-2">
                  <button aria-label="Scroll up"><svg viewBox="0 0 10 6" className="h-[6px] w-[10px]" fill="none" stroke="#bbb" strokeWidth="1.800"><path d="m.5 5.500 4.500-4.500 4.500 4.500" /></svg></button>
                  <button aria-label="Scroll down"><svg viewBox="0 0 10 6" className="h-[6px] w-[10px]" fill="none" stroke="#bbb" strokeWidth="1.800"><path d="m.5.5 4.500 4.500L9.500.5" /></svg></button>
                </div>
              </div>
            </fieldset>
            <fieldset className="mt-1 h-[341px] border border-[#dcdcdc]">
              <legend className="ml-1 px-1 pt-px leading-[18px]">Diagnostics</legend>
              <div className="mt-[10px] flex h-4 items-center gap-[3px] pl-3">
                <Check id="full" initial={false} />
                <label htmlFor="full" className="pt-1">Full Analysis</label>
              </div>
              <div className="mt-[17px]">
                {DIAG.map((d, i) => (
                  <div key={d.t} className={`flex h-[25px] items-center ${d.sub ? "pl-[62px]" : "pl-[37px]"}`}>
                    {d.cb ? <Check id={`d${i}`} initial={!!d.n} /> : <span className="size-4" />}
                    <span className="mx-[9px] mb-1 flex size-4 items-center justify-center">
                      {d.n ? (
                        <svg viewBox="0 0 16 16" className="size-4" aria-label="ok"><path d="M0 3q3 1 5 4 4-4 11-7Q9 7 6 16H4Q3 9 0 3z" fill="#258545" /></svg>
                      ) : (
                        <span className="size-1 rounded-full bg-[#3030a8]" />
                      )}
                    </span>
                    <span className="w-14 font-bold">{d.n}</span>
                    <label htmlFor={`d${i}`}>{d.t}</label>
                  </div>
                ))}
              </div>
              <div className="mt-[13px] mr-3 flex justify-end">
                <button className="flex h-[31px] w-[139px] items-center border border-[#adadad] bg-[#e1e1e1] pl-px">
                  <Ico s="size-5">{wiz.Diagnostics}</Ico>
                  <span className="flex-1 pr-1 text-center">Update</span>
                </button>
              </div>
            </fieldset>
          </div>

          <div className="mt-auto flex justify-end gap-[7px] pr-6">
            <button className="flex h-[33px] w-[189px] items-center border border-[#adadad] bg-[#e1e1e1] pl-[3px]">
              <Ico s="size-[22px]"><path d="M2 9h9V3.500h3L22 12l-8 8.500h-3V15H2z" fill="#5fcc45" stroke="#226d1c" strokeWidth="1.300" /></Ico>
              <span className="flex-1 pr-3 text-center">Follow Advice</span>
            </button>
            <WButton w="h-8 w-[74px]">Close</WButton>
            <WButton w="h-8 w-[74px]">Help</WButton>
          </div>
        </div>
      </div>
      <svg viewBox="0 0 14 14" className="absolute right-0 bottom-0 size-[14px]" stroke="#8f8f8f" strokeWidth="1.300" aria-hidden="true">
        <path d="M0 14 14 0M4 14 14 4M8 14l6-6M12 14l2-2" />
      </svg>
    </div>
  );
}

/* ---------- bottom toolbar ---------- */

const Lens = ({ k = "#777", f = "#c3c3c3", h = "#f0a52c" }: { k?: string; f?: string; h?: string }) => (
  <>
    <path d="m13 14 9 8" stroke={h} strokeWidth="3.800" />
    <circle cx="8" cy="8" r="6.800" fill={f} stroke={k} strokeWidth="1.500" />
  </>
);
const GN = "#84bb45";
const GK = "#3f5a2a";
const Tri = ({ f = GN, k = GK, d = "M11 1 3 22l17-8z" }: { f?: string; k?: string; d?: string }) => <path d={d} fill={f} stroke={k} strokeWidth="1.300" />;

const TOOLS: [string, React.ReactNode][] = [
  ["Zoom", <Lens />],
  ["Zoom part", <><path d="m10 4 8-3 5 4v12l-8 5-8-3V9" stroke="#555" strokeWidth="1.200" /><Lens /></>],
  ["Unzoom", <><path d="m5 14 3 8 10-1" fill="#ddd" stroke="#bbb" strokeWidth="1.300" /><Lens k="#b5b5b5" f="#dcdcdc" h="#c2c2c2" /></>],
  ["Zoom selection", <><Lens /><g transform="translate(0 8) scale(.62)"><CubeShape k="#3a9be8" t="#d8edfc" w={1.8} /></g></>],
  ["Standard views", <><CubeShape t="#2f8bd8" l="none" r="none" w={1.4} /><path d="M12 3v10m0 0-9 5m9-5 9 5" stroke="#4a4a4a" strokeWidth="1.200" /></>],
  ["v", null],
  ["View face", <><CubeShape r="#2f8bd8" w={1.4} /><Arrow /></>],
  ["Shade", <CubeShape t="#3c3c3c" l="#6e6e6e" r="#bfbfbf" k="#777" w={1} />],
  ["v", null],
  ["|", null],
  ["Mark triangle", <><Tri d="M12 1 2 22q8-5 18-4z" /><Arrow /></>],
  ["Mark plane", <><Tri d="m4 6 16-5v16L4 22z" /><Arrow /></>],
  ["Mark surface", <><Tri d="M2 22q-1-7 6-9 6-3 6-11h8q0 8-5 11-6 3-6 9z" /><Arrow /></>],
  ["Mark shell", <><Tri d="M8 22q-7-5-7-11Q3 1 12 1t11 10q0 6-7 11z" /><path d="M8 3q-2 8 1 18M16 3q2 8-1 18M12 2v20" stroke={GK} /><Arrow /></>],
  ["|", null],
  ["Rectangle", <><path d="M1 4h22v16H1z" fill={GN} stroke={GK} strokeWidth="1.400" /><Pen /></>],
  ["Free form", <><Tri d="M9 10q-1-8 7-9 8 1 7 8-2 5-8 5-1 8-8 8Q0 21 1 14q2-5 8-4z" /><Pen /></>],
  ["Curve", <><path d="M2 21q9 1 10-8 1-8 10-11" stroke={GK} strokeWidth="4.500" /><path d="M2 21q9 1 10-8 1-8 10-11" stroke={GN} strokeWidth="2.400" /><path d="m13 14 9 8" stroke="#555" strokeWidth="1.800" /></>],
  ["Brush", <><path d="M1 4h22v17H1z" fill={GN} stroke={GK} strokeWidth="1.400" /><path d="m2 5 5 15 5-15 4 13 6-13" stroke={GK} strokeWidth="1.200" /><Pen /></>],
  ["v", null],
  ["|", null],
  ["Mark mode", <><CubeShape t="#f0a52c" l="#2f8bd8" r={GN} k="#4a5a3a" w={1.2} /><Arrow /></>],
  ["v", null],
  ["|", null],
  ["Flip", <><Tri f="#aaa" k="#555" d="M9 1 1 22l4-1 8-18z" /><Tri d="M13 1 5 22l17-5z" /><path d="m14 20 9-7M14 15v7h6M18 12h5v6" stroke="#2f93e6" strokeWidth="2.600" /></>],
  ["Move", <><Tri f="#c4c4c4" k="#9a9a9a" d="M10 4 2 22l17-7z" /><path d="m10 15 4-9 8-4-1 8z" fill="#a5a5a5" /></>],
  ["c", null],
  ["Delete", <><Tri f="#c0c0c0" k="#999" d="M11 1 2 22l18-7z" /><path d="m13 13 9 9m0-9-9 9" stroke="#8c8c8c" strokeWidth="2.400" /></>],
  ["Copy", <><Tri f="#b5b5b5" k="#999" d="M11 1 2 22l18-7z" /><path d="M12 12h6v9h-6zM16 14h6v9h-6z" fill="#fff" stroke="#888" strokeWidth="1.300" /></>],
  ["Separate", <><path d="M9 1 1 22" stroke="#999" strokeDasharray="2 3" strokeWidth="1.500" /><Tri f="#b5b5b5" k="#8f8f8f" d="M13 1 5 22l18-6z" /></>],
  ["|", null],
  ["Select", <><Tri f="#d3d3d3" k="#a3a3a3" d="M11 1 2 22l18-7z" /><Arrow c="#777" /></>],
  ["Hide", <><Tri f="#fff" k="#aaa" d="M11 1 2 22l18-7z" /><ellipse cx="17" cy="18" rx="6" ry="3.500" fill="#b5b5b5" /><circle cx="17" cy="18" r="1.800" fill="#fff" /></>],
  ["Show", <><Tri f="#b9b9b9" k="#444" d="M11 1 2 22l18-7z" /><ellipse cx="17" cy="18" rx="6" ry="3.500" fill="#2f93e6" /><circle cx="17" cy="18" r="1.800" fill="#fff" /></>],
  ["v", null],
  ["|", null],
];

function BottomBar() {
  return (
    <div className="flex h-[34px] shrink-0 items-center bg-white pl-1">
      <span className="mr-[5px] h-[22px] w-0 border-l-2 border-dotted border-black" />
      {TOOLS.map(([t, icon], i) =>
        t === "v" || t === "c" ? (
          <button key={i} aria-label="More" className="flex w-3 justify-center"><svg viewBox="0 0 8 4" className="h-1 w-[6px]"><path d="M0 0h8L4 4z" fill={t === "v" ? "#7a7a7a" : "#c4c4c4"} /></svg></button>
        ) : t === "|" ? (
          <span key={i} className="flex w-[7px] shrink-0 justify-center"><span className="h-6 w-px bg-[#d9d9d9]" /></span>
        ) : (
          <button key={i} aria-label={t} className="flex h-[30px] w-[31px] shrink-0 items-center justify-center"><Ico>{icon}</Ico></button>
        ),
      )}
      {[0, 1].map((n) => (
        <span key={n} className="flex bg-[#cfe5fa]">
          <button aria-label="Triangle display" className="flex h-[30px] w-[29px] items-center justify-center bg-[#9dc7ea]">
            <Ico>
              {n === 0 ? (
                <><path d="M14 1 23 17 5 22" stroke="#e0b23a" strokeWidth="1.500" /><Tri d="M11 1 2 22l17-6z" f="#9cb84a" /></>
              ) : (
                <><Tri d="M14 1 8 20l15-5z" f="#dc4437" k="#7a2a22" /><Tri d="M10 1 2 22l17-6z" f="#7db53e" /></>
              )}
            </Ico>
          </button>
          <button aria-label="More" className="flex w-[15px] items-center justify-center"><svg viewBox="0 0 8 4" className="h-1 w-[6px]"><path d="M0 0h8L4 4z" fill="#6f7f90" /></svg></button>
        </span>
      ))}
    </div>
  );
}

export default function App() {
  return (
    <div className="relative flex min-h-screen flex-col overflow-hidden bg-white font-['Open_Sans',sans-serif]">
      <TitleBar />
      <Tabs />
      <Ribbon />
      <main className="flex flex-1">
        <div className="flex min-w-0 flex-1 flex-col">
          <div className="relative flex-1 bg-[#badefa]">
            <Scene />
          </div>
          <Ruler />
        </div>
        <SidePanels />
      </main>
      <BottomBar />
      <footer className="flex h-[23px] shrink-0 flex-col bg-[#2b96fa] text-[13px] text-[#0d2c55]">
        <span className="flex-1 pt-[2px] pl-[6px] leading-[20px]">Ready</span>
        <span className="flex h-[2px] bg-[#0b3f78]"><span className="ml-[60px] w-[430px] bg-[#a9d6fb]" /></span>
      </footer>
      <FixWizard />
    </div>
  );
}
